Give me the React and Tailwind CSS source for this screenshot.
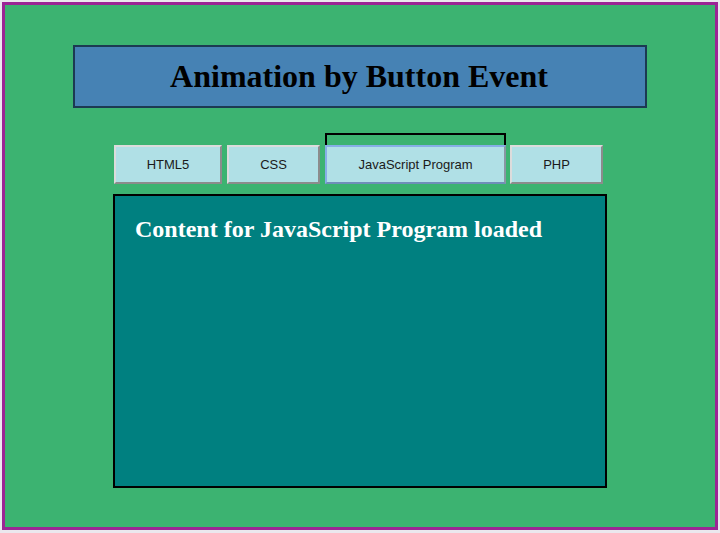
export default function App() {
  const tabs = [
    { name: 'HTML5', w: 'w-[108px]' },
    { name: 'CSS', w: 'w-[93px]' },
    { name: 'JavaScript Program', w: 'w-[181px]', active: true },
    { name: 'PHP', w: 'w-[93px] -ml-[1px]' },
  ]

  return (
    <div className="h-[533px] bg-[#ebe8ee] pt-[2px] pl-[2px]">
      <div className="w-[716px] h-[528px] border-[3px] border-[#9b2595] bg-[#3cb371]">
        {/* Title */}
        <div className="mt-[40px] mx-auto w-[574px] h-[63px] border-2 border-[#1c3a52] bg-[#4682b4] flex items-center justify-center">
          <h1 className="text-[32px] font-bold text-black font-['Liberation_Serif',serif] leading-none pb-[2px] pr-[2px]">
            Animation by Button Event
          </h1>
        </div>

        <div className="mx-auto w-[494px] mt-[25px]">
          {/* Tabs */}
          <div className="flex items-end gap-[5px] pl-[1px] h-[51px]">
            {tabs.map((tab) => (
              <div key={tab.name} className="flex flex-col">
                {tab.active && (
                  <div className="h-[12px] border-t-2 border-x-2 border-black" />
                )}
                <button
                  className={`${tab.w} h-[39px] border-2 bg-[#b0e0e6] text-[13px] text-[#1a1a1a] font-['Liberation_Sans',Arial,sans-serif] ${
                    tab.active
                      ? 'border-t-[#86aee6] border-l-[#86aee6] border-b-[#6f8fb8] border-r-[#8a96a4]'
                      : 'border-t-[#dcdcdc] border-l-[#dcdcdc] border-b-[#8c8c8c] border-r-[#8c8c8c]'
                  }`}
                >
                  {tab.name}
                </button>
              </div>
            ))}
          </div>

          {/* Content */}
          <div className="mt-[10px] h-[294px] border-2 border-black bg-[#008080] px-[20px] pt-[18px]">
            <p className="text-[24px] font-bold text-white font-['Liberation_Serif',serif] leading-tight">
              Content for JavaScript Program loaded
            </p>
          </div>
        </div>
      </div>
    </div>
  )
}
